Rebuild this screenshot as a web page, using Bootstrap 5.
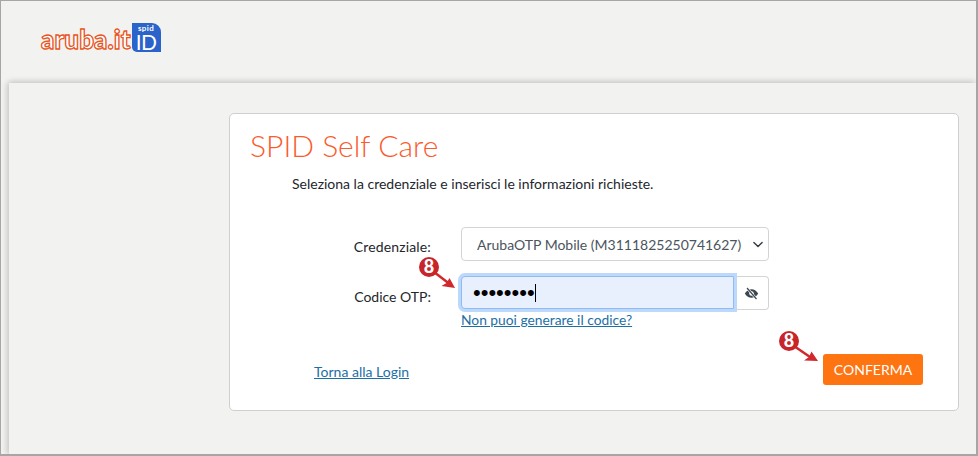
<!DOCTYPE html>
<html lang="it"><head><meta charset="utf-8"><title>SPID Self Care</title>
<link rel="stylesheet" href="https://cdn.jsdelivr.net/npm/bootstrap@5.3.0/dist/css/bootstrap.min.css">
<style>
html,body{height:100%;margin:0}
body{background:#f2f2f1;font-family:Lato,"Liberation Sans",sans-serif;font-size:14px;color:#2b2f36;overflow:hidden}
.frame{height:456px;border:1px solid #a6a6a6;border-width:1px 2px 2px 1px;position:relative;overflow:hidden}
.topbar{height:82px;padding:22px 0 0 40px}
.logo-word{font-family:Lato,sans-serif;font-weight:900;font-size:26px;letter-spacing:.1px;line-height:30px;color:#fff;-webkit-text-stroke:1.3px #e8541b;margin-top:1px;white-space:nowrap}
.logo-badge{width:29px;height:29px;background:#2a63c9;border-radius:0 9px 0 5px;color:#fff;text-align:center;line-height:1;margin-left:1px}
.logo-spid{font-size:8px;font-weight:700;height:9px;line-height:9px;letter-spacing:.4px;padding-top:1px}
.logo-id{font-size:21px;font-weight:400;line-height:19px;letter-spacing:-.5px}
.stage{height:372px;margin-left:8px;background:#f2f2f1;box-shadow:0 -2px 6px rgba(0,0,0,.12),-3px 0 6px rgba(0,0,0,.1);padding:30px 18px 0 220px}
.panel{width:730px;height:298px;background:#fff;border:1px solid #cfcfcf;border-radius:5px;padding:14px 20px;position:relative}
.headline{font-family:"Lato Light",Lato,sans-serif;font-weight:300;font-size:30px;line-height:34px;color:#fb5a2d;margin:0}
.intro{margin:12px 0 0 42px;line-height:20px;font-size:14px;color:#23272d}
.field-row{display:flex;align-items:center}
.row-cred{margin-top:33px}
.row-otp{margin-top:15px}
.row-help{line-height:19px}
.field-label{width:181px;text-align:right;margin:0;font-size:14px;color:#23272d}
.label-cred{margin-top:5px;letter-spacing:.15px}
.label-otp{margin-top:7px}
.field-slot{width:308px;margin-left:30px}
.slot-help{margin-left:211px}
.sel-cred{height:34px;font-size:14px;padding:0 18px 0 15px;color:#4a5560;border-color:#d4d4d4;border-radius:4px;background-position:right 3px center;font-family:Lato,sans-serif;background-size:14px 11px}
.otp-input{height:33px;width:273px;flex:none;background:#e8f0fd;border:1px solid #8fbcf4;border-radius:4px 0 0 4px;box-shadow:0 0 0 3px #bcd8fb;padding:0 0 0 11px;color:#000;display:flex;align-items:center;font-family:"Liberation Sans",sans-serif;font-size:22px;position:relative;z-index:1}
.caret-bar{width:1px;height:18px;background:#000}
.eye-btn{width:35px;height:34px;border:1px solid #d4d4d4;border-left:0;border-radius:0 4px 4px 0;background:#fff;display:flex;align-items:center;justify-content:center;padding:0}
.plain-link{color:#1d6fa5;text-decoration:underline;font-size:14px}
.help-link{font-size:13.8px}
.login-link{margin-top:3px}
.go-btn{background:#fd7411;border:0;color:#fff;font-size:14px;width:100px;height:31px;padding:0;border-radius:3px}
.go-btn:hover{background:#fd7411;color:#fff}
.foot-row{display:flex;justify-content:space-between;align-items:center;padding:0 15px 0 64px;margin-top:25px}
.marker{position:absolute;overflow:visible}
.marker-a{left:187px;top:143px}
.marker-b{left:547px;top:217px}
</style></head>
<body>
<div class="frame">
  <div class="topbar d-flex align-items-start">
    <div class="logo-word">aruba.it</div>
    <div class="logo-badge"><div class="logo-spid">spid</div><div class="logo-id">ID</div></div>
  </div>
  <div class="stage">
    <div class="panel">
      <h1 class="headline">SPID Self Care</h1>
      <p class="intro">Seleziona la credenziale e inserisci le informazioni richieste.</p>
      <div class="field-row row-cred">
        <label class="field-label label-cred">Credenziale:</label>
        <div class="field-slot">
          <select class="form-select sel-cred"><option>ArubaOTP Mobile (M3111825250741627)</option></select>
        </div>
      </div>
      <div class="field-row row-otp">
        <label class="field-label label-otp">Codice OTP:</label>
        <div class="field-slot d-flex">
          <div class="otp-input">&#8226;&#8226;&#8226;&#8226;&#8226;&#8226;&#8226;&#8226;<span class="caret-bar"></span></div>
          <button class="eye-btn" type="button" aria-label="Mostra">
            <svg width="15" height="13" viewBox="0 0 15 13"><path d="M.8 6.5C2.6 3.6 4.9 2.2 7.5 2.2s4.9 1.400 6.700 4.300c-1.800 2.900-4.100 4.300-6.700 4.300S2.600 9.400.8 6.500Z" fill="#3d4750"/><circle cx="7.500" cy="6.500" r="2.300" fill="#fff"/><path d="M3 1l9.500 11" stroke="#fff" stroke-width="2.600"/><path d="M3 1l9.500 11" stroke="#3d4750" stroke-width="1.200"/></svg>
          </button>
        </div>
      </div>
      <div class="field-row row-help">
        <div class="field-slot slot-help"><a class="plain-link help-link" href="#">Non puoi generare il codice?</a></div>
      </div>
      <div class="foot-row">
        <a class="plain-link login-link" href="#">Torna alla Login</a>
        <button class="btn go-btn" type="button">CONFERMA</button>
      </div>
      <svg class="marker marker-a" width="48" height="36" viewBox="0 0 48 36">
        <path d="M17 15 32 26.500" stroke="#d0282c" stroke-width="2.500"/><path d="M38 31 24.500 29 29.500 26 32.500 21Z" fill="#d0282c"/>
        <circle cx="12" cy="10" r="10" fill="#c8252a"/><text x="12" y="16" text-anchor="middle" font-family="Lato,sans-serif" font-weight="900" font-size="18" fill="#fff">8</text>
      </svg>
      <svg class="marker marker-b" width="48" height="36" viewBox="0 0 48 36">
        <path d="M17 15 33 26" stroke="#d0282c" stroke-width="2.500"/><path d="M41 30 27 29.500 32 26 34.500 20.500Z" fill="#d0282c"/>
        <circle cx="12" cy="10" r="10" fill="#c8252a"/><text x="12" y="16" text-anchor="middle" font-family="Lato,sans-serif" font-weight="900" font-size="18" fill="#fff">8</text>
      </svg>
    </div>
  </div>
</div>
</body></html>
